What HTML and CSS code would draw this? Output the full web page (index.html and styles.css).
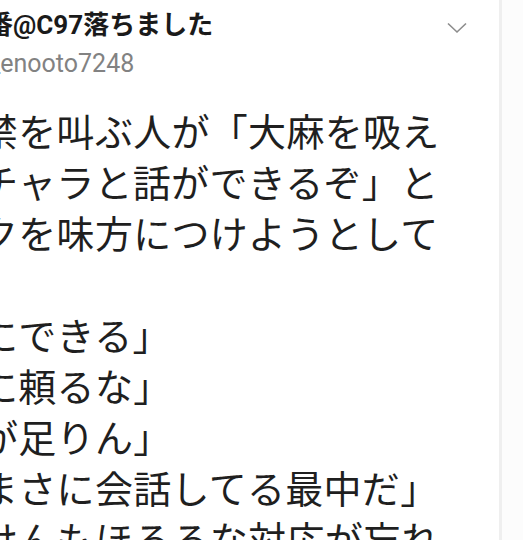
FILE: index.html
```html
<!DOCTYPE html>
<html lang="ja">
<head>
    <meta charset="UTF-8">
    <meta name="viewport" content="width=device-width, initial-scale=1.0">
    <title>Tweet</title>
    <link rel="stylesheet" href="styles.css">
</head>
<body>

    <div class="card">
        <div class="tweet-head">
            <div class="names">
                <div class="display-name">番@C97落ちました</div>
                <div class="handle">_enooto7248</div>
            </div>
            <svg class="chevron" width="20" height="12" viewBox="0 0 20 12">
                <polyline points="1,1.5 10,10 19,1.5" fill="none" stroke="#8c8c8c" stroke-width="1.6"/>
            </svg>
        </div>
        <div class="tweet-text">
            禁を叫ぶ人が「大麻を吸え<br>
            チャラと話ができるぞ」と<br>
            クを味方につけようとして<br>
            <br>
            にできる」<br>
            に頼るな」<br>
            が足りん」<br>
            まさに会話してる最中だ」<br>
            けんもほろろな対応が忘れ
        </div>
    </div>

</body>
</html>
```

FILE: styles.css
```css
body {
    margin: 0;
    background: #fcfcfc;
    font-family: Roboto, "Noto Sans CJK JP", sans-serif;
    color: #1f1f1f;
}

.card {
    width: 499px;
    height: 540px;
    overflow: hidden;
    background: #fff;
    border-right: 3px solid #efefef;
}

.tweet-head {
    display: flex;
    justify-content: space-between;
    align-items: flex-start;
    padding-top: 9px;
}

.names {
    white-space: nowrap;
}

.display-name {
    margin-left: -13px;
    font-size: 26px;
    font-weight: bold;
    line-height: 32px;
    color: #1a1a1a;
}

.handle {
    margin-left: -11px;
    margin-top: 8px;
    font-size: 25px;
    line-height: 30px;
    color: #828282;
}

.chevron {
    margin-top: 13px;
    margin-right: 32px;
}

.tweet-text {
    margin-top: 25px;
    margin-left: -20px;
    font-family: "Noto Sans CJK JP", sans-serif;
    font-size: 38px;
    letter-spacing: 0.3px;
    line-height: 51px;
    white-space: nowrap;
}
```
